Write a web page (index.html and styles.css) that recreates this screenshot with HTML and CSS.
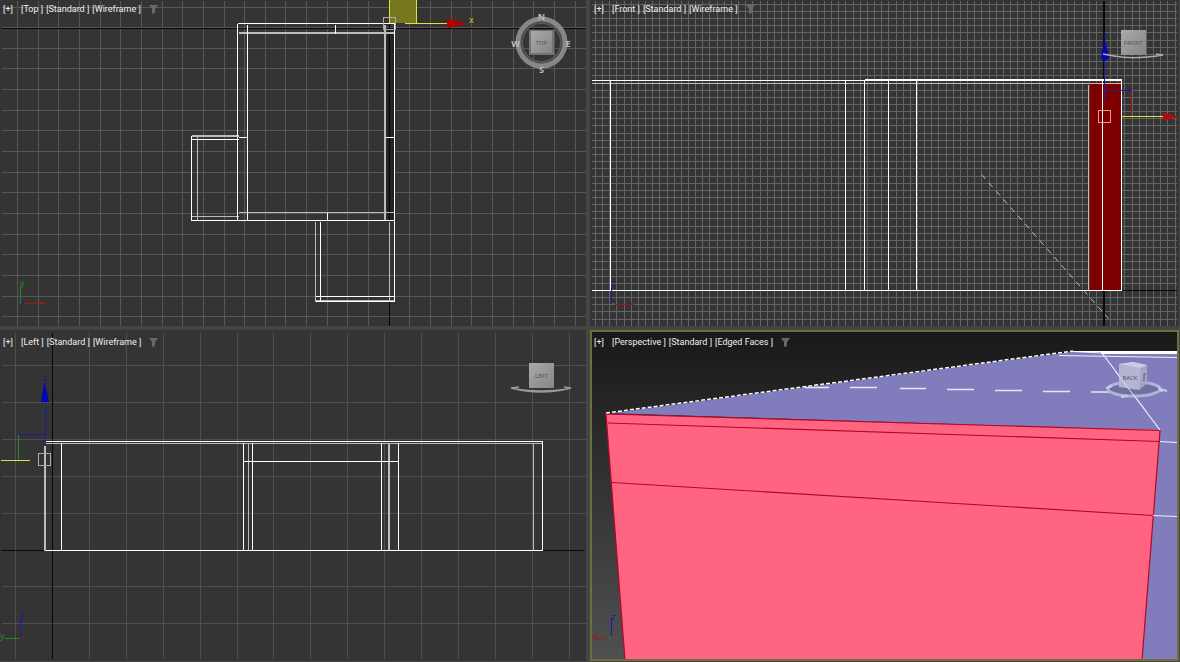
FILE: index.html
```html
<!DOCTYPE html>
<html lang="en">
<head>
<meta charset="utf-8">
<title>Viewports</title>
<link rel="stylesheet" href="styles.css">
</head>
<body>
<svg width="0" height="0" class="defs" aria-hidden="true">
  <defs>
    <linearGradient id="sky" x1="0" y1="0" x2="0" y2="1"><stop offset="0" stop-color="#191919"/><stop offset="1" stop-color="#505050"/></linearGradient>
    <linearGradient id="face" x1="0" y1="0" x2="1" y2="1"><stop offset="0" stop-color="#aaa"/><stop offset="1" stop-color="#858585"/></linearGradient>
    <symbol id="funnel" viewBox="0 0 9 9"><path d="M0 0H9L6 4V8L3 9V4Z" fill="#686868"/></symbol>
  </defs>
</svg>
<main class="viewports">
  <section class="viewport">
    <svg class="scene" viewBox="0 0 586 326" preserveAspectRatio="xMinYMin slice">
      <g transform="translate(.5 .5)">
        <path class="grid" data-x="17.500" data-y="7" data-step="20.65" data-box="1 0 585 325"/>
        <path class="axis" d="M0 28H584M389 0V325"/>
        <rect class="shade" x="386" y="30" width="8" height="190"/>
        <path class="axis" d="M389 30V220"/>
        <path class="wire dim" d="M238 32H394M238 33H394M384 24V220M385 24V220M197 135V220M191 135H238M191 136H238M191 216H238M238 212H394M315 221V301M389 221V301M315 300H394"/>
        <path class="wire" d="M237 23H394V301H315M237 23V220M247 24V220M191 220H394M191 135V220M191 139H238M238 137H247M385 137H394M335 24V33M327 212V220M320 221V301M315 296H394"/>
      </g>
      <rect x="389" y="0" width="28" height="23" fill="#77771f"/>
      <path class="yellow" d="M389.500 0V23M416.500 0V23M405 23.500H447"/>
      <path d="M447 20L449 19L467 23.500L449 28L447 27Z" fill="#b50000"/>
      <text class="mark gold" x="469" y="23">x</text>
      <rect class="pivot" x="383.500" y="17.500" width="12" height="12"/>
      <circle cx="541.500" cy="42.500" r="23.500" fill="none" stroke="#858789" stroke-width="5"/>
      <circle cx="541.500" cy="42.500" r="19.500" fill="none" stroke="#555759" stroke-width="2"/>
      <rect x="529" y="30" width="25" height="25" fill="#747474"/><rect x="531" y="31" width="21" height="22" fill="url(#face)"/>
      <text class="cube" x="541.500" y="45">TOP</text>
      <g class="compass"><text x="541.500" y="20">N</text><text x="541.500" y="73">S</text><text x="515.500" y="47">W</text><text x="568" y="47">E</text></g>
      <path class="green" d="M20.500 304V286"/><path class="red" d="M22 303.500H44M41 302.500H45"/><path class="blue" d="M21 303.500H24M22.500 301V305"/>
      <text class="mark greenText" x="20" y="286">y</text>
    </svg>
    <header class="bar"><button>[+]</button><button>[Top ]</button><button>[Standard ]</button><button>[Wireframe ]</button><button class="filter" aria-label="Filter"><svg class="funnel"><use href="#funnel"/></svg></button></header>
  </section>

  <section class="viewport">
    <svg class="scene" viewBox="590 0 589 326" preserveAspectRatio="xMinYMin slice">
      <g transform="translate(.5 .5)">
        <path class="grid fine" data-x="595.500" data-y="4.300" data-step="7.155" data-box="591 0 1176 325"/>
        <path class="axis" d="M1103 0V325M1104 0V325M1121 290H1176"/>
        <rect x="1089" y="82" width="32" height="208" fill="#7d0000"/>
        <path class="wire dim" d="M591 83H1121M1088 84V290"/>
        <path class="wire" d="M591 80H1121M864 79H1121M610 80V290M845 80V290M864 79V290M888 80V290M916 80V290M1102 80V290M1121 80V290M591 290H1121"/>
        <path class="dash" d="M981 174L1108 318"/>
        <path class="blue" d="M1104 100V56M1104 90H1131"/><path class="red" d="M1131 90V116"/><path class="yellow" d="M1121 116H1163"/>
      </g>
      <path d="M1101 58L1104.500 38L1109 58L1105 61Z" fill="#0505b5"/><text class="mark blueText" x="1103" y="38">z</text>
      <path d="M1163 113L1176 116V118L1163 120Z" fill="#bd0505"/>
      <rect x="1098.500" y="110.500" width="12" height="12" fill="none" stroke="#e69a91"/>
      <path d="M1103 54L1114 56Q1133 60 1163 55L1156 54" fill="none" stroke="#aaa" stroke-width="1.500"/>
      <rect x="1121" y="30" width="25" height="25" fill="url(#face)"/><text class="cube" x="1133.500" y="45">FRONT</text>
      <path class="blue" d="M611.500 304V286"/><path class="red" d="M615 304.500H634M631 303.500H635"/><path class="green" d="M612 303L615 305"/><text class="mark blueText" x="611" y="286">z</text>
    </svg>
    <header class="bar"><button>[+]</button><button>[Front ]</button><button>[Standard ]</button><button>[Wireframe ]</button><button class="filter" aria-label="Filter"><svg class="funnel"><use href="#funnel"/></svg></button></header>
  </section>

  <section class="viewport">
    <svg class="scene" viewBox="0 330 586 331" preserveAspectRatio="xMinYMin slice">
      <g transform="translate(.5 .5)">
        <path class="grid wide" data-x="15.500" data-y="365.400" data-step="36.920" data-box="1 332 585 658"/>
        <path class="axis" d="M52 332V658M0 550H584"/>
        <path class="wire dim" d="M44 445V550M45 445V550M248 442V550M388 442V550M389 442V550M533 442V550M45 443H542"/>
        <path class="wire" d="M45 441H542V549M45 550H542M61 442V550M243 442V550M252 442V550M243 461H398M381 442V550M398 442V550"/>
        <path class="blue" d="M45 445V400M18 434H45"/><path class="green" d="M18 434V460"/><path class="yellow" d="M0 460H29"/>
      </g>
      <path d="M41 402L44 383H45L49 402Z" fill="#0505b5"/><text class="mark blueText" x="43" y="381">z</text>
      <rect class="pivot" x="38.500" y="453.500" width="12" height="12"/>
      <path d="M519 387L511 388Q541 396 571 388L564 387M515 389Q541 393 568 389" fill="none" stroke="#999" stroke-width="1.500"/>
      <rect x="529" y="363" width="25" height="25" fill="url(#face)"/><text class="cube" x="541.500" y="378">LEFT</text>
      <path class="blue" d="M20.500 638V622L22 618"/><path class="green" d="M5 638.500H20"/><path class="red" d="M21 637.500H24"/><text class="mark blueText" x="20" y="619">z</text><text class="mark greenText" x="0" y="639">y</text>
    </svg>
    <header class="bar"><button>[+]</button><button>[Left ]</button><button>[Standard ]</button><button>[Wireframe ]</button><button class="filter" aria-label="Filter"><svg class="funnel"><use href="#funnel"/></svg></button></header>
  </section>

  <section class="viewport active">
    <svg class="scene" viewBox="592 332 585 327" preserveAspectRatio="xMinYMin slice">
      <rect x="592" y="332" width="585" height="327" fill="url(#sky)"/>
      <path d="M606 413L1073 351H1178V660H1120L1150 430Z" fill="#817dbd"/>
      <path d="M606 414L1160 430L1142 660H625Z" fill="#ff6581"/>
      <path d="M625 660L606 414L1160 430.500L1142 660M608 423L1160 441.500M612 482.500L1153 515.500" fill="none" stroke="#b3072b" stroke-width="1.200"/>
      <path d="M606 413L1073 351" fill="none" stroke="#191919" stroke-width="1.500"/>
      <path d="M606 413L1073 351" fill="none" stroke="#fff" stroke-width="1.500" stroke-dasharray="4 2"/>
      <path d="M805 387.500H829M850 387.500H877M900 388.500H926M947 389.500H974M995 390.500H1022M1043 391.500H1070M1091 392H1118" stroke="#e5e5fa" stroke-width="1.500"/>
      <path d="M1073 351.500L1102 353L1160 430M1059 355.500L1177 357.500M1160 441.500L1177 442.500M1153 515.500L1177 516.500" fill="none" stroke="#efeffc" stroke-width="1.200"/>
      <path d="M1073 351.500H1102" stroke="#fff"/><path d="M1101 352.500H1177" stroke="#fff" stroke-width="3"/>
      <ellipse cx="1134" cy="389" rx="26" ry="7" fill="#7170a5" stroke="#b1b3d5" stroke-width="3"/>
      <path d="M1106 388L1112 386M1160 389L1167 391M1121 397L1128 396M1158 386L1162 392" stroke="#c9cbea" stroke-width="2"/>
      <path d="M1119 364L1133 362L1147 365V383L1139 390L1119 387Z" fill="#b4b5d1"/><path d="M1119 364L1133 362L1147 365L1141 368Z" fill="#cbcce2"/><path d="M1141 368L1147 365V383L1139 390Z" fill="#a4a5c5"/>
      <text class="cube" x="1130" y="380">BACK</text><path d="M1144 374V381M1144 374H1146" stroke="#555775"/>
      <path d="M1115 371L1146 411" stroke="#e3e3f5"/>
      <path class="blue" d="M611.500 636V618"/><path class="red" d="M594 638.500H606M593 634L597 638M597 634L593 638"/><path class="green" d="M608 637L610 639L612 637"/><text class="mark blueText" x="611" y="620">z</text>
    </svg>
    <header class="bar"><button>[+]</button><button>[Perspective ]</button><button>[Standard ]</button><button>[Edged Faces ]</button><button class="filter" aria-label="Filter"><svg class="funnel"><use href="#funnel"/></svg></button></header>
  </section>
</main>
<script src="grid.js"></script>
</body>
</html>
```
FILE: styles.css
```css
* { box-sizing: border-box; }
body { margin: 0; background: #444545; font-family: "Noto Sans", "Open Sans", sans-serif; }
.defs { position: absolute; }
.viewports {
  display: grid;
  grid-template-columns: 586fr 589fr;
  grid-template-rows: 326fr 331fr;
  gap: 4px;
  height: 100vh;
  padding: 0 1px 1px 0;
}
.viewport {
  position: relative;
  min-width: 0;
  min-height: 0;
  overflow: hidden;
  background: #343434;
}
.viewport:nth-child(n + 3) .bar { padding-top: 5px; }
.viewport.active { border: 2px solid #706e3b; }
.viewport.active .bar { padding: 3px 2px; }
.viewport:nth-child(2) .bar { padding-left: 4px; }
.scene { position: absolute; inset: 0; width: 100%; height: 100%; }
.active .scene { background: #191919; }
.bar { position: relative; display: flex; align-items: center; gap: 3px; padding: 2px 3px; }
.bar button {
  padding: 0;
  border: 0;
  background: none;
  color: #f0f0f0;
  font: 9px/14px Roboto, "Noto Sans", sans-serif;
  white-space: pre;
}
.bar button:first-child { min-width: 15px; text-align: left; }
.bar .filter { display: flex; margin-left: 5px; }
.funnel { width: 9px; height: 9px; }
.grid, .axis, .wire, .yellow, .red, .green, .blue, .pivot { fill: none; shape-rendering: crispEdges; }
.grid { stroke: #575757; }
.grid.fine { stroke: #646464; }
.grid.wide { stroke: #4f4f4f; }
.axis { stroke: #080808; }
.shade { fill: #222; }
.wire { stroke: #fff; }
.wire.dim { stroke: #babdba; }
.dash { stroke: #bbb; stroke-dasharray: 6 5; }
.yellow { stroke: #e1e13d; }
.red { stroke: #991b1b; }
.green { stroke: #28862d; }
.blue { stroke: #1d1d9d; }
.pivot { stroke: #aaa; }
.mark { font: 9px "Noto Sans", sans-serif; }
.gold { fill: #dcbf13; }
.greenText { fill: #28862d; }
.blueText { fill: #1818a6; }
.cube { font: 6px "Noto Sans", sans-serif; fill: #555; text-anchor: middle; }
.compass { font: bold 9px "Noto Sans", sans-serif; fill: #bbb; text-anchor: middle; }
```
FILE: grid.js
```js
// Builds each construction grid from its origin, spacing and bounds.
document.querySelectorAll(".grid").forEach(function (path) {
  var step = Number(path.dataset.step);
  var box = path.dataset.box.split(" ").map(Number);
  var d = "";
  for (var x = Number(path.dataset.x); x < box[2]; x += step) {
    d += "M" + Math.floor(x) + " " + box[1] + "V" + box[3];
  }
  for (var y = Number(path.dataset.y); y < box[3]; y += step) {
    d += "M" + box[0] + " " + Math.floor(y) + "H" + box[2];
  }
  path.setAttribute("d", d);
});
```
